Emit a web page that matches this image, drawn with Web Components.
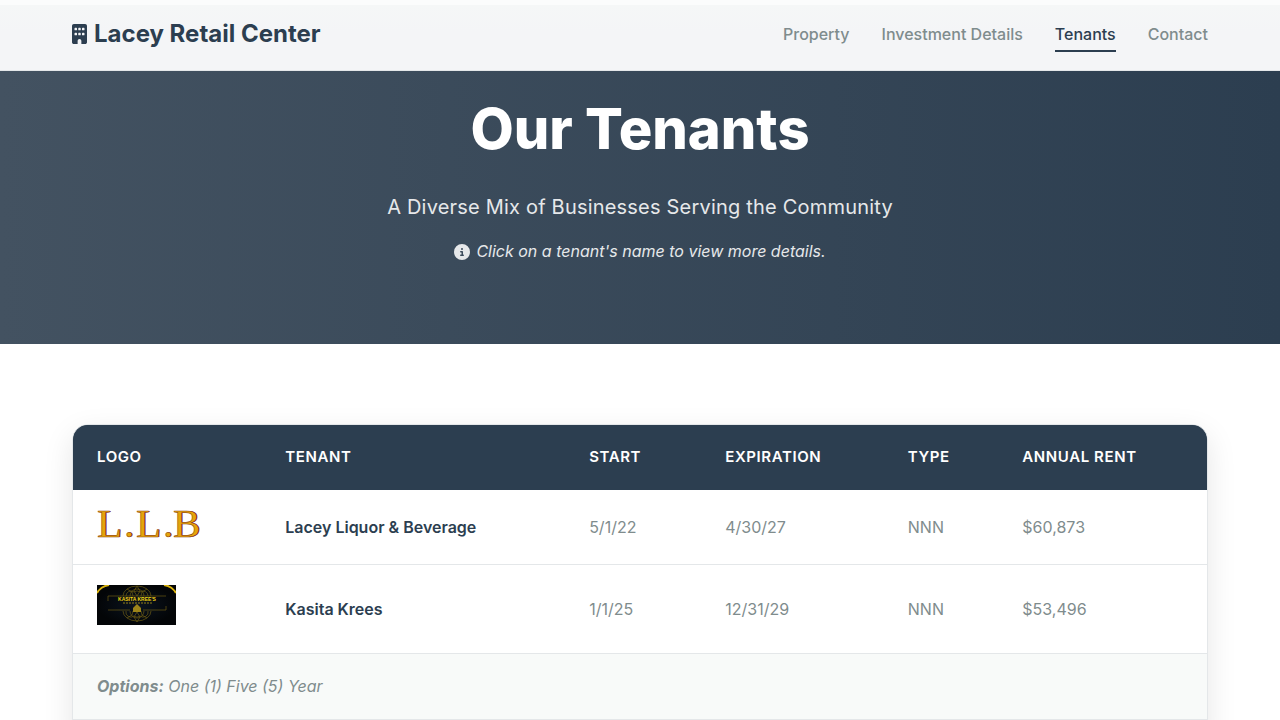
<!DOCTYPE html>
<html lang="en">
<head>
<meta charset="utf-8">
<meta name="viewport" content="width=device-width, initial-scale=1">
<title>Our Tenants | Lacey Retail Center</title>
<style>
:root {
  --primary: #2c3e50;
  --muted: #7f8c8d;
  --line: #e4e7e9;
  --soft: #f8faf9;
}
body {
  margin: 0;
  background: #fff;
  color: var(--primary);
  font-family: Inter, "Liberation Sans", sans-serif;
  font-size: 16px;
  line-height: 25px;
}
</style>
</head>
<body>
<site-header>
  <nav-link href="#property">Property</nav-link>
  <nav-link href="#investment">Investment Details</nav-link>
  <nav-link href="#tenants" current>Tenants</nav-link>
  <nav-link href="#contact">Contact</nav-link>
</site-header>
<main>
  <page-hero>
    <span slot="title">Our Tenants</span>
    <span slot="subtitle">A Diverse Mix of Businesses Serving the Community</span>
    <span slot="hint">Click on a tenant's name to view more details.</span>
  </page-hero>
  <tenant-table></tenant-table>
</main>
<script>
function define(name, html, setup) {
  const template = document.createElement('template');
  template.innerHTML = html;
  customElements.define(name, class extends HTMLElement {
    constructor() {
      super();
      this.attachShadow({ mode: 'open' }).append(template.content.cloneNode(true));
    }
    connectedCallback() {
      if (setup) setup(this, this.shadowRoot);
    }
  });
}

define('nav-link', `
<style>
:host { display: block; }
a {
  display: block;
  padding: 4px 0;
  border-bottom: 2px solid transparent;
  color: var(--muted);
  font-weight: 500;
  line-height: 24px;
  text-decoration: none;
}
:host([current]) a { color: var(--primary); border-color: var(--primary); }
</style>
<a><slot></slot></a>`, (host, root) => {
  const link = root.querySelector('a');
  link.href = host.getAttribute('href');
  if (host.hasAttribute('current')) link.setAttribute('aria-current', 'page');
});

define('site-header', `
<style>
:host {
  display: block;
  position: sticky;
  top: 0;
  z-index: 10;
  border-bottom: 1px solid var(--line);
  background: linear-gradient(#fbfcfc 5px, #f5f7f7 5px, #f4f5f7 32px);
}
.bar {
  display: flex;
  align-items: center;
  justify-content: space-between;
  box-sizing: border-box;
  max-width: 1200px;
  min-height: 70px;
  margin: 0 auto;
  padding: 0 32px;
}
.brand {
  display: flex;
  align-items: center;
  gap: 7px;
  padding-bottom: 2px;
  color: var(--primary);
  font-size: 24px;
  font-weight: 700;
  line-height: 32px;
  text-decoration: none;
}
svg { display: block; width: 15px; height: 20px; }
nav { display: flex; gap: 32px; }
</style>
<div class="bar">
  <a class="brand" href="#home">
    <svg viewBox="0 0 384 512" fill="currentColor" aria-hidden="true"><path d="M48 0C21.500 0 0 21.500 0 48V464c0 26.500 21.500 48 48 48h96V432c0-26.500 21.500-48 48-48s48 21.500 48 48v80h96c26.500 0 48-21.500 48-48V48c0-26.500-21.500-48-48-48H48zM64 240c0-8.800 7.200-16 16-16h32c8.800 0 16 7.200 16 16v32c0 8.800-7.200 16-16 16H80c-8.800 0-16-7.200-16-16V240zm112-16h32c8.800 0 16 7.200 16 16v32c0 8.800-7.200 16-16 16H176c-8.800 0-16-7.200-16-16V240c0-8.800 7.200-16 16-16zm80 16c0-8.800 7.200-16 16-16h32c8.800 0 16 7.200 16 16v32c0 8.800-7.200 16-16 16H272c-8.800 0-16-7.200-16-16V240zM80 96h32c8.800 0 16 7.200 16 16v32c0 8.800-7.200 16-16 16H80c-8.800 0-16-7.200-16-16V112c0-8.800 7.200-16 16-16zm80 16c0-8.800 7.200-16 16-16h32c8.800 0 16 7.200 16 16v32c0 8.800-7.200 16-16 16H176c-8.800 0-16-7.200-16-16V112zM272 96h32c8.800 0 16 7.200 16 16v32c0 8.800-7.200 16-16 16H272c-8.800 0-16-7.200-16-16V112c0-8.800 7.200-16 16-16z"/></svg>
    <span>Lacey Retail Center</span>
  </a>
  <nav aria-label="Main"><slot></slot></nav>
</div>`);

define('page-hero', `
<style>
:host {
  display: block;
  padding: 24px 32px 80px;
  background: linear-gradient(90deg, #435261, #2c3e50);
  color: #fff;
  text-align: center;
}
h1 { margin: 0; font-size: 56px; font-weight: 800; line-height: 68px; }
p { margin: 0; color: #e6e8ea; }
.subtitle { margin-top: 28px; font-size: 20px; line-height: 32px; letter-spacing: 0.01em; }
.hint {
  display: flex;
  align-items: center;
  justify-content: center;
  gap: 6px;
  margin-top: 16px;
  font-style: italic;
}
svg { display: block; width: 16px; height: 16px; }
</style>
<h1><slot name="title"></slot></h1>
<p class="subtitle"><slot name="subtitle"></slot></p>
<p class="hint">
  <svg viewBox="0 0 512 512" fill="currentColor" aria-hidden="true"><path d="M256 512A256 256 0 1 0 256 0a256 256 0 1 0 0 512zM216 336h24V272H216c-13.300 0-24-10.700-24-24s10.700-24 24-24h48c13.300 0 24 10.700 24 24v88h8c13.300 0 24 10.700 24 24s-10.700 24-24 24H216c-13.300 0-24-10.700-24-24s10.700-24 24-24zm40-208a32 32 0 1 1 0 64 32 32 0 1 1 0-64z"/></svg>
  <slot name="hint"></slot>
</p>`);

define('llb-logo', `
<style>
:host { display: block; height: 34px; }
svg { display: block; width: 102px; height: 30px; overflow: visible; }
text { font-family: "Liberation Serif", serif; font-size: 41px; }
</style>
<svg viewBox="0 0 102 30" role="img" aria-label="L.L.B">
  <text y="27" fill="#7a2414"><tspan x="1">L</tspan><tspan x="28">.</tspan><tspan x="40">L</tspan><tspan x="67">.</tspan><tspan x="77">B</tspan></text>
  <text y="27" fill="#e5a50a" stroke="#8a3a1c" stroke-width="0.500"><tspan x="0">L</tspan><tspan x="27">.</tspan><tspan x="39">L</tspan><tspan x="66">.</tspan><tspan x="76">B</tspan></text>
</svg>`);

define('kasita-logo', `
<style>
:host { display: block; height: 48px; }
svg { display: block; width: 79px; height: 40px; }
text { font-family: "Liberation Sans", sans-serif; font-size: 5px; font-weight: 700; }
</style>
<svg viewBox="0 0 79 40" role="img" aria-label="Kasita Krees">
  <defs>
    <radialGradient id="night"><stop offset="0" stop-color="#0b1420"/><stop offset="1" stop-color="#030507"/></radialGradient>
  </defs>
  <rect width="79" height="40" fill="url(#night)"/>
  <g fill="none" stroke="#8c7514" stroke-width="0.700" opacity="0.750">
    <path d="M26 11a14 10 0 0 1 28 0M29 11a5 5 0 0 1 8-4 5 5 0 0 1 6 0 5 5 0 0 1 8 4M33 11a7 7 0 0 1 14 0M40 1l3 5-3 5-3-5zM30 4l5 3 1 4M50 4l-5 3-1 4"/>
    <path d="M26 26a14 10 0 0 0 28 0M29 26a5 5 0 0 0 8 5 5 5 0 0 0 6 0 5 5 0 0 0 8-5M33 26a7 7 0 0 0 14 0M40 37l3-5-3-5-3 5zM30 33l5-3 1-4M50 33l-5-3-1-4"/>
    <path d="M11 16v-5h58M69 21v4H46M11 25h22"/>
  </g>
  <path d="M0 8C2 4 6 1 12 0M79 8C77 4 73 1 67 0" fill="none" stroke="#d9b20e" stroke-width="2"/>
  <path d="M40 19l4 4v4h-8v-4z" fill="#9c8419"/>
  <text x="40" y="16" text-anchor="middle" fill="#f2d312">KASITA KREE'S</text>
  <path d="M26 18h29" stroke="#b99f18" stroke-width="0.800" stroke-dasharray="2 1"/>
</svg>`);

define('tenant-table', `
<style>
:host {
  display: block;
  box-sizing: border-box;
  max-width: 1200px;
  margin: 0 auto;
  padding: 80px 32px;
}
.card {
  overflow: hidden;
  padding-bottom: 24px;
  border: 1px solid var(--line);
  border-radius: 16px;
  background: linear-gradient(var(--primary) 32px, #fff 32px);
  box-shadow: 0 10px 30px rgba(0, 0, 0, 0.1);
}
table { width: 100%; border-collapse: separate; border-spacing: 0; text-align: left; }
th, td { padding: 20px 24px; }
thead th {
  border-bottom: 1px solid var(--primary);
  background: var(--primary);
  color: #fff;
  font-size: 15px;
  font-weight: 600;
  line-height: 24px;
  letter-spacing: 0.04em;
  text-transform: uppercase;
}
td, tbody th { border-bottom: 1px solid var(--line); color: var(--muted); }
tbody th { font-weight: 600; }
th a { color: var(--primary); text-decoration: none; }
.options td { background: var(--soft); font-style: italic; }
.logo { width: 16.6%; }
.tenant { width: 26.8%; }
.start { width: 12%; }
.expiration { width: 16.1%; }
.type { width: 10.1%; }
</style>
<div class="card">
  <table>
    <colgroup><col class="logo"><col class="tenant"><col class="start"><col class="expiration"><col class="type"><col></colgroup>
    <thead>
      <tr><th scope="col">Logo</th><th scope="col">Tenant</th><th scope="col">Start</th><th scope="col">Expiration</th><th scope="col">Type</th><th scope="col">Annual Rent</th></tr>
    </thead>
    <tbody>
      <tr><td><llb-logo></llb-logo></td><th scope="row"><a href="#lacey-liquor">Lacey Liquor &amp; Beverage</a></th><td>5/1/22</td><td>4/30/27</td><td>NNN</td><td>$60,873</td></tr>
      <tr><td><kasita-logo></kasita-logo></td><th scope="row"><a href="#kasita-krees">Kasita Krees</a></th><td>1/1/25</td><td>12/31/29</td><td>NNN</td><td>$53,496</td></tr>
      <tr class="options"><td colspan="6"><strong>Options:</strong> One (1) Five (5) Year</td></tr>
    </tbody>
  </table>
</div>`);
</script>
</body>
</html>
